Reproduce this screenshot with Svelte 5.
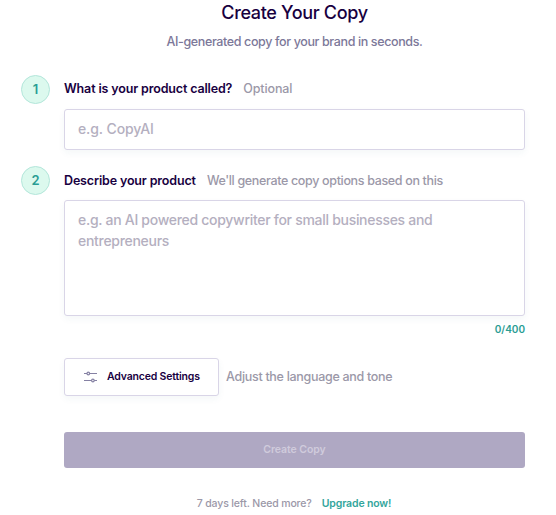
<script>
  let name = $state('');
  let description = $state('');
  const limit = 400;
</script>

<main>
  <h1>Create Your Copy</h1>
  <p class="subtitle">AI-generated copy for your brand in seconds.</p>

  <section class="step first">
    <span class="badge">1</span>
    <div class="field">
      <div class="heading">
        <label for="name">What is your product called?</label>
        <span class="hint short">Optional</span>
      </div>
      <input id="name" placeholder="e.g. CopyAI" bind:value={name} />
    </div>
  </section>

  <section class="step second">
    <span class="badge">2</span>
    <div class="field">
      <div class="heading">
        <label for="description">Describe your product</label>
        <span class="hint">We'll generate copy options based on this</span>
      </div>
      <textarea
        id="description"
        maxlength={limit}
        placeholder="e.g. an AI powered copywriter for small businesses and entrepreneurs"
        bind:value={description}
      ></textarea>
      <div class="count">{description.length}/{limit}</div>
    </div>
  </section>

  <div class="settings">
    <button class="advanced">
      <svg width="14" height="12" viewBox="0 0 14 12" fill="none" stroke="#8581a3" stroke-width="1.2">
        <path d="M0 2.5H3M5.6 2.5H13M0 9.5H7.6M10.2 9.5H13" />
        <circle cx="4.3" cy="2.5" r="1.3" />
        <circle cx="8.9" cy="9.5" r="1.3" />
      </svg>
      <span>Advanced Settings</span>
    </button>
    <span class="hint">Adjust the language and tone</span>
  </div>

  <button class="create" disabled>Create Copy</button>

  <footer>
    <span>7 days left. Need more?</span>
    <a href="#upgrade">Upgrade now!</a>
  </footer>
</main>

<style>
  :global(body) {
    margin: 0;
    background: #fff;
  }
  main {
    box-sizing: border-box;
    width: 556px;
    height: 515px;
    overflow: hidden;
    padding: 0 31px 0 21px;
    font-family: Inter, 'Liberation Sans', sans-serif;
    white-space: nowrap;
    color: #18003f;
  }
  h1 {
    margin: 2px 0 0 43px;
    text-align: center;
    font-size: 18px;
    line-height: 22px;
    font-weight: 500;
    letter-spacing: -0.33px;
  }
  .subtitle {
    margin: 9px 0 0 43px;
    text-align: center;
    font-size: 12.5px;
    line-height: 18px;
    font-weight: 500;
    letter-spacing: -0.37px;
    color: #7c7899;
  }
  .step {
    display: flex;
    gap: 14px;
  }
  .first {
    margin-top: 24px;
  }
  .second {
    margin-top: 16px;
  }
  .badge {
    box-sizing: border-box;
    flex: none;
    width: 29px;
    height: 29px;
    border: 1px solid #b3e6da;
    border-radius: 50%;
    background: #dcf9ee;
    color: #2a9d94;
    font-size: 13px;
    line-height: 27px;
    font-weight: 600;
    text-align: center;
  }
  .field {
    flex: 1;
    min-width: 0;
  }
  .heading {
    display: flex;
    gap: 11px;
    height: 34px;
    line-height: 28px;
    font-size: 12.5px;
  }
  .second .heading {
    line-height: 30px;
  }
  label {
    font-weight: 600;
    letter-spacing: -0.15px;
  }
  .hint {
    font-size: 12.5px;
    font-weight: 500;
    letter-spacing: -0.34px;
    color: #9b98a8;
  }
  .short {
    letter-spacing: -0.12px;
  }
  input,
  textarea {
    display: block;
    box-sizing: border-box;
    width: 100%;
    border: 1px solid #d9d5e7;
    border-radius: 3px;
    background: #fff;
    box-shadow: 0 3px 7px rgba(30, 90, 110, 0.05);
    font-family: inherit;
    font-size: 14px;
    font-weight: 500;
    color: #18003f;
    outline: none;
    resize: none;
  }
  input {
    height: 41px;
    padding: 0 13px 2px;
    letter-spacing: -0.1px;
  }
  textarea {
    height: 116px;
    padding: 8px 13px;
    line-height: 21px;
    letter-spacing: -0.29px;
  }
  ::placeholder {
    color: #b4afc0;
    opacity: 1;
  }
  .count {
    margin-top: 5px;
    text-align: right;
    font-size: 10px;
    line-height: 16px;
    font-weight: 600;
    color: #2a9d94;
  }
  .settings {
    display: flex;
    align-items: center;
    gap: 7px;
    margin: 21px 0 0 43px;
  }
  .settings .hint {
    padding-bottom: 2px;
    letter-spacing: -0.3px;
  }
  .advanced {
    box-sizing: border-box;
    display: flex;
    align-items: center;
    gap: 9px;
    width: 155px;
    height: 38px;
    padding: 0 0 0 19px;
    border: 1px solid #d9d5e7;
    border-radius: 3px;
    background: #fff;
    box-shadow: 0 3px 7px rgba(30, 90, 110, 0.05);
    font-family: inherit;
    font-size: 10.5px;
    font-weight: 600;
    letter-spacing: -0.18px;
    color: #18003f;
  }
  .advanced span {
    padding-bottom: 2px;
  }
  .create {
    display: block;
    width: 461px;
    height: 36px;
    margin: 36px 0 0 43px;
    padding: 0 0 2px;
    border: 0;
    border-radius: 3px;
    background: #afa8c3;
    color: #d0cbdc;
    font-family: inherit;
    font-size: 10.5px;
    font-weight: 600;
    letter-spacing: -0.08px;
  }
  footer {
    display: flex;
    justify-content: center;
    gap: 10px;
    margin: 28px 0 0 43px;
    padding-right: 1px;
    font-size: 10.5px;
    line-height: 16px;
    font-weight: 500;
    letter-spacing: -0.14px;
    color: #9b98a8;
  }
  a {
    color: #33a59c;
    font-weight: 600;
    text-decoration: none;
  }
</style>
